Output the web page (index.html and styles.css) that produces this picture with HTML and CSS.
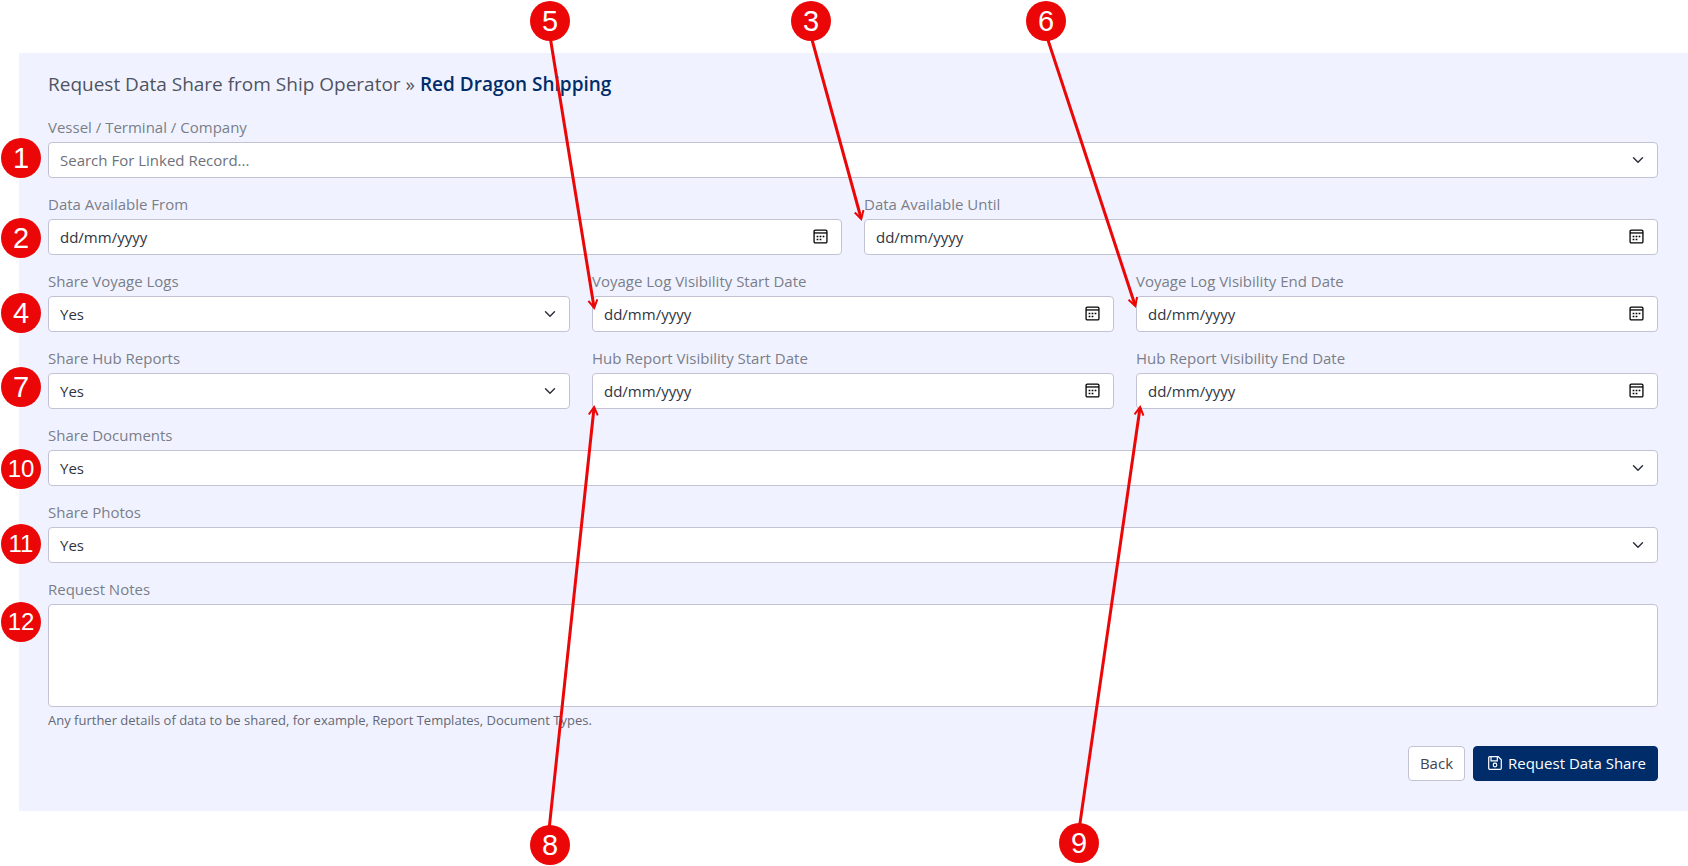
FILE: index.html
```
<!DOCTYPE html>
<html lang="en-GB">
<head>
    <meta charset="UTF-8">
    <meta name="viewport" content="width=device-width, initial-scale=1.0">
    <title>Request Data Share</title>
    <link rel="stylesheet" href="styles.css">
</head>
<body>
    <!-- shared icons -->
    <svg class="sprite" aria-hidden="true">
        <symbol id="calendar" viewBox="0 0 14 14">
            <rect x="1" y="1" width="12" height="12" rx="1.2" fill="none" stroke="currentColor" stroke-width="1.2"/>
            <path d="M1 3.7h12" stroke="currentColor" stroke-width="1.2"/>
            <path d="M3.4 6.2h1.6v1.6H3.4zM6.2 6.2h1.6v1.6H6.2zM9 6.2h1.6v1.6H9zM3.4 9h1.6v1.6H3.4zM6.2 9h1.6v1.6H6.2z" fill="currentColor"/>
        </symbol>
    </svg>

    <main class="panel">
        <h1>Request Data Share from Ship Operator » <strong>Red Dragon Shipping</strong></h1>
        <form class="form">
            <div class="field">
                <label for="record">Vessel / Terminal / Company</label>
                <select id="record" class="control select empty">
                    <option>Search For Linked Record...</option>
                </select>
            </div>

            <div class="row">
                <div class="field">
                    <label for="from">Data Available From</label>
                    <div class="control date">
                        <input type="text" id="from" placeholder="dd/mm/yyyy">
                        <button type="button" aria-label="Pick date"><svg><use href="#calendar"/></svg></button>
                    </div>
                </div>
                <div class="field">
                    <label for="until">Data Available Until</label>
                    <div class="control date">
                        <input type="text" id="until" placeholder="dd/mm/yyyy">
                        <button type="button" aria-label="Pick date"><svg><use href="#calendar"/></svg></button>
                    </div>
                </div>
            </div>

            <div class="row">
                <div class="field">
                    <label for="logs">Share Voyage Logs</label>
                    <select id="logs" class="control select">
                        <option>Yes</option>
                        <option>No</option>
                    </select>
                </div>
                <div class="field">
                    <label for="logs-start">Voyage Log Visibility Start Date</label>
                    <div class="control date">
                        <input type="text" id="logs-start" placeholder="dd/mm/yyyy">
                        <button type="button" aria-label="Pick date"><svg><use href="#calendar"/></svg></button>
                    </div>
                </div>
                <div class="field">
                    <label for="logs-end">Voyage Log Visibility End Date</label>
                    <div class="control date">
                        <input type="text" id="logs-end" placeholder="dd/mm/yyyy">
                        <button type="button" aria-label="Pick date"><svg><use href="#calendar"/></svg></button>
                    </div>
                </div>
            </div>

            <div class="row">
                <div class="field">
                    <label for="reports">Share Hub Reports</label>
                    <select id="reports" class="control select">
                        <option>Yes</option>
                        <option>No</option>
                    </select>
                </div>
                <div class="field">
                    <label for="reports-start">Hub Report Visibility Start Date</label>
                    <div class="control date">
                        <input type="text" id="reports-start" placeholder="dd/mm/yyyy">
                        <button type="button" aria-label="Pick date"><svg><use href="#calendar"/></svg></button>
                    </div>
                </div>
                <div class="field">
                    <label for="reports-end">Hub Report Visibility End Date</label>
                    <div class="control date">
                        <input type="text" id="reports-end" placeholder="dd/mm/yyyy">
                        <button type="button" aria-label="Pick date"><svg><use href="#calendar"/></svg></button>
                    </div>
                </div>
            </div>

            <div class="field">
                <label for="documents">Share Documents</label>
                <select id="documents" class="control select">
                    <option>Yes</option>
                    <option>No</option>
                </select>
            </div>

            <div class="field">
                <label for="photos">Share Photos</label>
                <select id="photos" class="control select">
                    <option>Yes</option>
                    <option>No</option>
                </select>
            </div>

            <div class="field">
                <label for="notes">Request Notes</label>
                <textarea id="notes" class="control notes" aria-describedby="notes-help"></textarea>
                <p id="notes-help" class="help">Any further details of data to be shared, for example, Report Templates, Document Types.</p>
            </div>

            <div class="actions">
                <button type="button" class="btn">Back</button>
                <button type="submit" class="btn primary">
                    <svg viewBox="0 0 14 14" fill="none" stroke="currentColor" stroke-width="1.2">
                        <path d="M1.8.7h8.4l3.1 3.1v8.4a1.1 1.1 0 0 1-1.1 1.1H1.8a1.1 1.1 0 0 1-1.1-1.1V1.8A1.1 1.1 0 0 1 1.8.7z"/>
                        <path d="M3 .9v4h6.3v-4"/>
                        <circle cx="7" cy="9" r="1.8"/>
                    </svg>
                    Request Data Share
                </button>
            </div>
        </form>
    </main>

    <!-- numbered callouts -->
    <svg class="callouts" viewBox="0 0 1688 866">
        <defs>
            <marker id="head" markerUnits="userSpaceOnUse" markerWidth="14" markerHeight="14" refX="10" refY="7" orient="auto">
                <path d="M3 2.5L11 7L3 11.5" fill="none" stroke="#eb0707" stroke-width="2"/>
            </marker>
        </defs>
        <g class="lines" marker-end="url(#head)">
            <path d="M549 30L594 307"/>
            <path d="M811 36L861 218"/>
            <path d="M1046 34L1135 305"/>
            <path d="M549 830L594 408"/>
            <path d="M1079 830L1140 408"/>
        </g>
        <g class="dots">
            <circle cx="21" cy="158" r="20"/>
            <circle cx="21" cy="238" r="20"/>
            <circle cx="811" cy="21" r="20"/>
            <circle cx="21" cy="313" r="20"/>
            <circle cx="550" cy="21" r="20"/>
            <circle cx="1046" cy="21" r="20"/>
            <circle cx="21" cy="387" r="20"/>
            <circle cx="550" cy="845" r="20"/>
            <circle cx="1079" cy="843" r="20"/>
            <circle cx="21" cy="469" r="20"/>
            <circle cx="21" cy="544" r="20"/>
            <circle cx="21" cy="622" r="20"/>
        </g>
        <g class="numbers">
            <text x="21" y="168">1</text>
            <text x="21" y="248">2</text>
            <text x="811" y="31">3</text>
            <text x="21" y="323">4</text>
            <text x="550" y="31">5</text>
            <text x="1046" y="31">6</text>
            <text x="21" y="397">7</text>
            <text x="550" y="855">8</text>
            <text x="1079" y="853">9</text>
        </g>
        <g class="numbers small">
            <text x="21" y="477">10</text>
            <text x="21" y="552">11</text>
            <text x="21" y="630">12</text>
        </g>
    </svg>
</body>
</html>
```

FILE: styles.css
```
* {
    box-sizing: border-box;
}
body {
    position: relative;
    margin: 0;
    padding: 53px 0 54px 19px;
    background: #fff;
    color: #31343f;
    font-family: "Open Sans", "Noto Sans", sans-serif;
    font-size: 15px;
    line-height: 20px;
}
.sprite {
    display: none;
}
.panel {
    padding: 17px 30px 30px 29px;
    background: #f0f3ff;
}
h1 {
    margin: 0 0 19px;
    color: #50535f;
    font-size: 19px;
    font-weight: 400;
    line-height: 28px;
}
h1 strong {
    color: #002d69;
    font-weight: 600;
}
.form {
    display: flex;
    flex-direction: column;
    gap: 16px;
}
.row {
    display: flex;
    gap: 22px;
}
.field {
    flex: 1;
    min-width: 0;
}
label {
    display: block;
    margin-bottom: 5px;
    color: #7b7e89;
}
.control {
    display: block;
    width: 100%;
    height: 36px;
    border: 1px solid #c1c3d3;
    border-radius: 4px;
    background-color: #fff;
    color: #31343f;
    font: inherit;
}
.select {
    appearance: none;
    padding: 0 36px 1px 11px;
    background-image: url("data:image/svg+xml,%3Csvg xmlns='http://www.w3.org/2000/svg' viewBox='0 0 16 16'%3E%3Cpath d='M2 5l6 6 6-6' fill='none' stroke='%2331343f' stroke-width='2' stroke-linecap='round' stroke-linejoin='round'/%3E%3C/svg%3E");
    background-position: right 13px center;
    background-repeat: no-repeat;
    background-size: 12px 12px;
}
.empty {
    color: #6e717b;
}
.date {
    display: flex;
    align-items: center;
    padding: 0 13px 1px 11px;
}
.date input {
    flex: 1;
    min-width: 0;
    padding: 0;
    border: 0;
    outline: 0;
    background: none;
    color: inherit;
    font: inherit;
}
.date input::placeholder {
    color: #31343f;
    opacity: 1;
}
.date button {
    display: flex;
    padding: 0;
    border: 0;
    background: none;
    color: #000;
}
.date svg {
    width: 15px;
    height: 15px;
}
.notes {
    height: 103px;
    padding: 6px 12px;
    resize: none;
}
.help {
    margin: 3px 0 0;
    color: #656874;
    font-size: 13px;
}
.actions {
    display: flex;
    justify-content: flex-end;
    gap: 8px;
}
.btn {
    display: flex;
    align-items: center;
    gap: 6px;
    height: 35px;
    padding: 0 11px 1px;
    border: 1px solid #c1c3d3;
    border-radius: 4px;
    background: #fff;
    color: #41444f;
    font: inherit;
}
.primary {
    padding: 0 11px 1px 14px;
    border-color: #002d69;
    background: #002d69;
    color: #fff;
}
.btn svg {
    width: 14px;
    height: 14px;
}
.callouts {
    display: block;
    position: absolute;
    top: 0;
    left: 0;
    width: 100%;
    pointer-events: none;
}
.lines {
    fill: none;
    stroke: #eb0707;
    stroke-width: 3;
}
.dots {
    fill: #eb0707;
}
.numbers {
    fill: #fff;
    font-family: "Liberation Sans", Arial, sans-serif;
    font-size: 29px;
    text-anchor: middle;
}
.small {
    font-size: 24px;
}
```
